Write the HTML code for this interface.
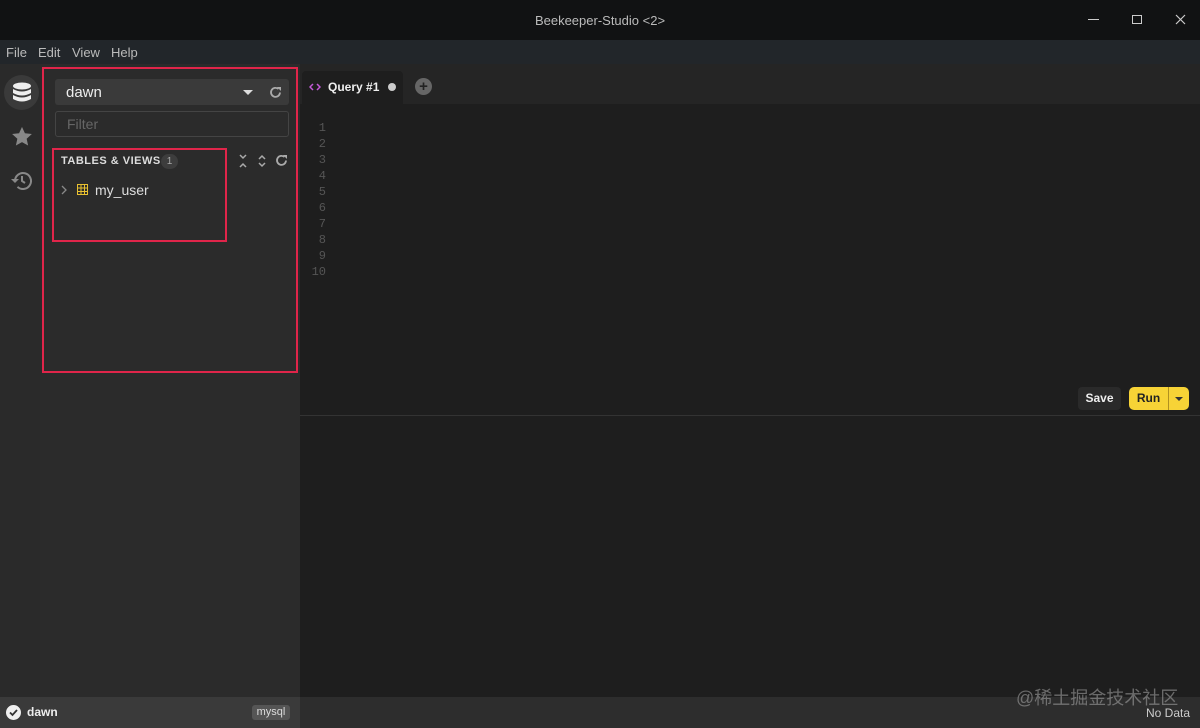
<!DOCTYPE html><html><head><style>
*{margin:0;padding:0;box-sizing:border-box}
body{width:1200px;height:728px;background:#1e1e1e;font-family:"Liberation Sans","Noto Sans CJK SC",sans-serif;position:relative;overflow:hidden;color:#ddd}
.a{position:absolute}
</style></head><body>
<div class="a" style="left:0;top:0;width:1200px;height:40px;background:#111213"></div>
<div class="a" style="left:0;top:13px;width:1200px;text-align:center;font-size:13px;color:#bbb">Beekeeper-Studio &lt;2&gt;</div>
<div class="a" style="left:1088px;top:19px;width:11px;height:1px;background:#ccc"></div>
<div class="a" style="left:1132px;top:15px;width:10px;height:9px;border:1px solid #ccc"></div>
<svg class="a" style="left:1175px;top:14px" width="11" height="11"><path d="M1 1l9 9M10 1l-9 9" stroke="#ccc" stroke-width="1.2"/></svg>
<div class="a" style="left:0;top:40px;width:1200px;height:24px;background:#22262a"></div>
<div class="a" style="left:6px;top:45px;font-size:13px;color:#bbb">File</div>
<div class="a" style="left:38px;top:45px;font-size:13px;color:#bbb">Edit</div>
<div class="a" style="left:72px;top:45px;font-size:13px;color:#bbb">View</div>
<div class="a" style="left:111px;top:45px;font-size:13px;color:#bbb">Help</div>
<div class="a" style="left:0;top:64px;width:40px;height:633px;background:#2a2a2a"></div>
<div class="a" style="left:40px;top:64px;width:260px;height:633px;background:#2b2b2b"></div>
<div class="a" style="left:4px;top:75px;width:35px;height:35px;border-radius:50%;background:#3a3a3a"></div>
<svg class="a" style="left:12px;top:82px" width="20" height="22" viewBox="0 0 20 22"><g fill="#eee"><ellipse cx="10" cy="4" rx="9" ry="3.5"/><path d="M1 7q9 5 18 0v4q-9 5-18 0z"/><path d="M1 13q9 5 18 0v4q-9 5-18 0z"/></g></svg>
<svg class="a" style="left:11px;top:126px" width="22" height="21" viewBox="0 0 24 23"><path d="M12 1l3.2 7 7.6.8-5.7 5.1 1.6 7.5L12 17.6 5.3 21.4l1.6-7.5L1.2 8.8 8.8 8z" fill="#888"/></svg>
<svg class="a" style="left:10px;top:169px" width="24" height="24" viewBox="0 0 24 24"><path d="M5 12a8 8 0 1 1 2.5 5.8" fill="none" stroke="#888" stroke-width="2"/><path d="M1 10l4 4 4-4z" fill="#888"/><path d="M12 7v5l3 2" fill="none" stroke="#888" stroke-width="2"/></svg>
<div class="a" style="left:42px;top:67px;width:256px;height:306px;border:2px solid #e0254a"></div>
<div class="a" style="left:55px;top:79px;width:234px;height:26px;background:#3a3a3a;border-radius:3px"></div>
<div class="a" style="left:66px;top:84px;font-size:15px;color:#eee">dawn</div>
<div class="a" style="left:243px;top:90px;border:5px solid transparent;border-top-color:#ddd;border-bottom:0"></div>
<svg class="a" style="left:269px;top:86px" width="13" height="13" viewBox="0 0 13 13"><path d="M11 6.5A4.5 4.5 0 1 1 9.5 3" fill="none" stroke="#aaa" stroke-width="1.8"/><path d="M8 1h4v4z" fill="#aaa"/></svg>
<div class="a" style="left:55px;top:111px;width:234px;height:26px;border:1px solid #444;border-radius:3px;background:#2b2b2b"></div>
<div class="a" style="left:67px;top:116px;font-size:14px;color:#666">Filter</div>
<div class="a" style="left:52px;top:148px;width:175px;height:94px;border:2px solid #e0254a"></div>
<div class="a" style="left:61px;top:155px;font-size:11px;font-weight:bold;color:#ddd;letter-spacing:.5px">TABLES &amp; VIEWS</div>
<div class="a" style="left:161px;top:154px;width:17px;height:15px;border-radius:8px;background:#3d3d3d;font-size:10px;color:#aaa;text-align:center;line-height:15px">1</div>
<svg class="a" style="left:238px;top:154px" width="10" height="14"><path d="M2 1l3 3 3-3M2 13l3-3 3 3" fill="none" stroke="#aaa" stroke-width="1.5"/></svg>
<svg class="a" style="left:257px;top:154px" width="10" height="14"><path d="M2 5l3-3 3 3M2 9l3 3 3-3" fill="none" stroke="#aaa" stroke-width="1.5"/></svg>
<svg class="a" style="left:275px;top:154px" width="13" height="13" viewBox="0 0 13 13"><path d="M11 6.5A4.5 4.5 0 1 1 9.5 3" fill="none" stroke="#aaa" stroke-width="1.8"/><path d="M8 1h4v4z" fill="#aaa"/></svg>
<svg class="a" style="left:61px;top:185px" width="6" height="10"><path d="M1 1l4 4-4 4" fill="none" stroke="#888" stroke-width="1.3"/></svg>
<svg class="a" style="left:77px;top:184px" width="11" height="11"><rect x=".5" y=".5" width="10" height="10" fill="none" stroke="#e8c030"/><path d="M0 4h11M0 7.5h11M4 0v11M7.5 0v11" stroke="#e8c030"/></svg>
<div class="a" style="left:95px;top:182px;font-size:14px;color:#ddd">my_user</div>
<div class="a" style="left:300px;top:64px;width:900px;height:40px;background:#252525"></div>
<div class="a" style="left:302px;top:71px;width:101px;height:33px;background:#1e1e1e;border-radius:4px 4px 0 0"></div>
<svg class="a" style="left:309px;top:83px" width="12" height="8"><path d="M4 1L1 4l3 3M8 1l3 3-3 3" fill="none" stroke="#c45ad8" stroke-width="1.5"/></svg>
<div class="a" style="left:328px;top:80px;font-size:12px;font-weight:bold;color:#eee">Query #1</div>
<div class="a" style="left:388px;top:83px;width:8px;height:8px;border-radius:50%;background:#ccc"></div>
<div class="a" style="left:415px;top:78px;width:17px;height:17px;border-radius:50%;background:#666;color:#222;font-size:15px;font-weight:bold;text-align:center;line-height:17px">+</div>
<div class="a" style="left:308px;top:120px;width:18px;font-family:'Liberation Mono',monospace;font-size:12px;line-height:16px;color:#555;text-align:right">1<br>2<br>3<br>4<br>5<br>6<br>7<br>8<br>9<br>10</div>
<div class="a" style="left:1078px;top:387px;width:43px;height:23px;background:#2a2a2a;border-radius:4px;font-size:12px;font-weight:bold;color:#eee;text-align:center;line-height:23px">Save</div>
<div class="a" style="left:1129px;top:387px;width:60px;height:23px;background:#f7d336;border-radius:5px"></div>
<div class="a" style="left:1129px;top:387px;width:39px;font-size:12px;font-weight:bold;color:#222;text-align:center;line-height:22px">Run</div>
<div class="a" style="left:1168px;top:387px;width:1px;height:23px;background:#b09020"></div>
<div class="a" style="left:1175px;top:397px;border:4px solid transparent;border-top-color:#333;border-bottom:0"></div>
<div class="a" style="left:300px;top:415px;width:900px;height:1px;background:#333"></div>
<div class="a" style="left:0;top:697px;width:300px;height:31px;background:#3a3a3a"></div>
<div class="a" style="left:300px;top:697px;width:900px;height:31px;background:#2d2d2d"></div>
<div class="a" style="left:6px;top:705px;width:15px;height:15px;border-radius:50%;background:#f0f0f0"></div>
<svg class="a" style="left:6px;top:705px" width="15" height="15"><path d="M4 7.5l2.5 2.5 4.5-5" fill="none" stroke="#333" stroke-width="1.8"/></svg>
<div class="a" style="left:27px;top:705px;font-size:12px;font-weight:bold;color:#eee">dawn</div>
<div class="a" style="left:252px;top:705px;width:38px;height:15px;background:#555;border-radius:3px;font-size:11px;color:#ddd;text-align:center;line-height:15px">mysql</div>
<div class="a" style="left:1016px;top:684px;font-size:18px;color:rgba(170,170,170,.55)">@稀土掘金技术社区</div>
<div class="a" style="left:1146px;top:706px;font-size:12px;color:#ccc">No Data</div>
</body></html>
